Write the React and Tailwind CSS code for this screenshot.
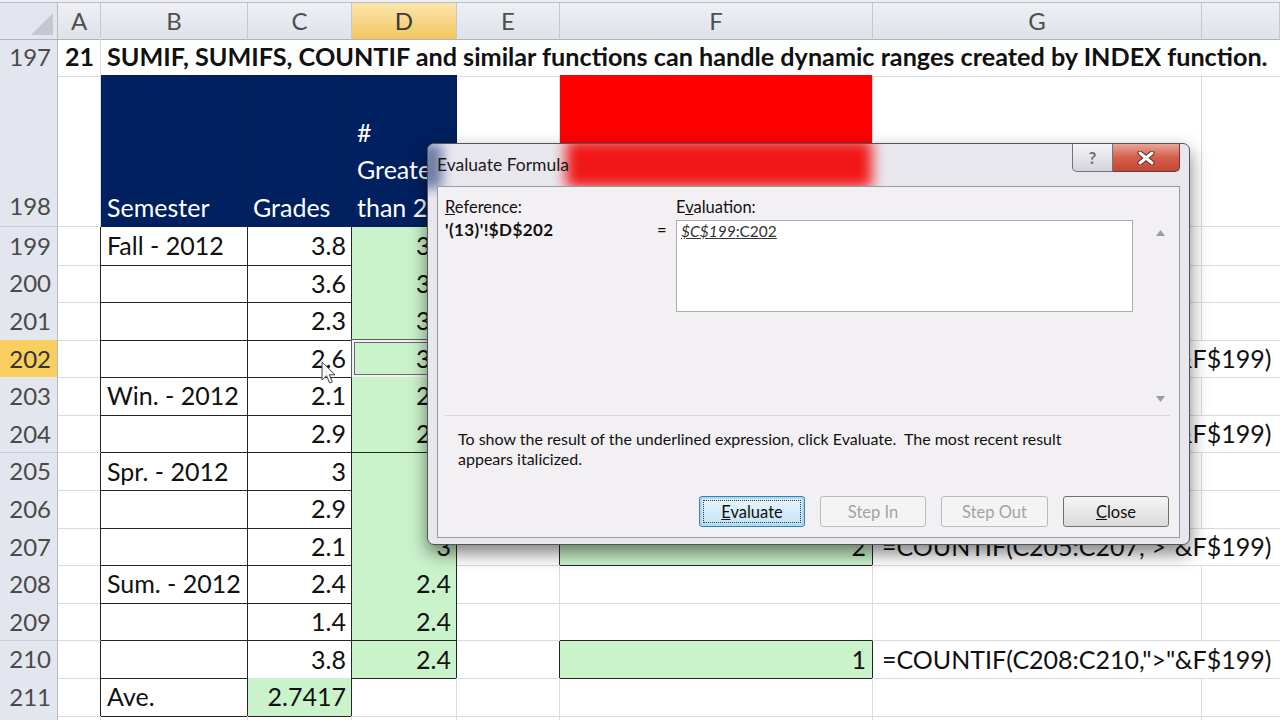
import React from "react";

const COLS = "grid grid-cols-[58px_43px_147px_104px_105px_103px_313px_329px_78px]";

const data = [
  { n: 199, b: "Fall - 2012", c: "3.8", d: "3.8", f: "2.5" },
  { n: 200, c: "3.6", d: "3.8" },
  { n: 201, c: "2.3", d: "3.8" },
  { n: 202, c: "2.6", d: "3.8", f: "3", g: '=COUNTIF(C199:C202,">"&F$199)', sel: true },
  { n: 203, b: "Win. - 2012", c: "2.1", d: "2.1" },
  { n: 204, c: "2.9", d: "2.1", f: "1", g: '=COUNTIF(C203:C204,">"&F$199)' },
  { n: 205, b: "Spr. - 2012", c: "3", d: "3" },
  { n: 206, c: "2.9", d: "3" },
  { n: 207, c: "2.1", d: "3", f: "2", g: '=COUNTIF(C205:C207,">"&F$199)' },
  { n: 208, b: "Sum. - 2012", c: "2.4", d: "2.4" },
  { n: 209, c: "1.4", d: "2.4" },
  { n: 210, c: "3.8", d: "2.4", f: "1", g: '=COUNTIF(C208:C210,">"&F$199)' },
  { n: 211, b: "Ave.", c: "2.7417", cGreen: true, noD: true },
];

// which cells carry the black "all borders" format
const boxed = (i, k) => {
  const r = data[i];
  if (!r) return false;
  if (k === 2 || k === 3) return true;
  if (k === 4) return !r.noD;
  if (k === 6) return r.f !== undefined;
  return false;
};

const rb = (dark) => (dark ? "border-r-[#262626]" : "border-r-[#d9dbe0]");
const bb = (dark) => (dark ? "border-b-[#262626]" : "border-b-[#d9dbe0]");

const rowHead =
  "flex items-center justify-end pr-[6px] text-[24px] text-[#4a4a4a] bg-[#e3e6ee] border-r border-b border-r-[#b7bcc6] border-b-[#c9cdd6]";

function ColumnHeader() {
  const letters = ["A", "B", "C", "D", "E", "F", "G", ""];
  return (
    <div className={`${COLS} h-[36px] border-t border-t-[#b9bec7]`}>
      <div className="relative bg-[#e3e6ee] border-r border-b border-r-[#b7bcc6] border-b-[#aeb3bc] flex items-end justify-end pr-[4px] pb-[4px]">
        <svg width="22" height="22" viewBox="0 0 22 22">
          <polygon points="22,0 22,22 0,22" fill="#c3c7cf" />
        </svg>
      </div>
      {letters.map((l, i) => (
        <div
          key={i}
          className={`flex items-center justify-center text-[24px] border-r border-b border-r-[#c3c8d1] border-b-[#aeb3bc] ${
            l === "D"
              ? "bg-linear-to-b from-[#fbe6ab] to-[#f3c65e] text-[#3a3a3a]"
              : "bg-linear-to-b from-[#eef0f5] to-[#dfe2ea] text-[#4f4f4f]"
          }`}
        >
          {l}
        </div>
      ))}
    </div>
  );
}

function TitleRow() {
  return (
    <div className={`${COLS} h-[37px]`}>
      <div className={rowHead}>197</div>
      <div className="flex items-center justify-end pr-[6px] text-[25px] font-bold border-r border-b border-r-[#d9dbe0] border-b-[#d9dbe0]">
        21
      </div>
      <div className="col-span-7 flex items-center pl-[6px] text-[25.2px] font-bold whitespace-nowrap border-b border-b-[#d9dbe0]">
        SUMIF, SUMIFS, COUNTIF and similar functions can handle dynamic ranges created by INDEX function.
      </div>
    </div>
  );
}

function HeaderRow() {
  const navy = "bg-[#002060] text-white border-r border-b border-[#0c1b4a] flex flex-col justify-end text-[25px] leading-[37.5px]";
  return (
    <div className={`${COLS} h-[152px]`}>
      <div className={`${rowHead} items-end pb-[2px]`}>198</div>
      <div className="border-r border-b border-r-[#d9dbe0] border-b-[#d9dbe0]" />
      <div className={`${navy} pl-[6px]`}>Semester</div>
      <div className={`${navy} pl-[5px]`}>Grades</div>
      <div className={`${navy} pl-[5px]`}>
        <span>#</span>
        <span>Greater</span>
        <span className="whitespace-nowrap">than 2.5</span>
      </div>
      <div className="border-r border-b border-r-[#d9dbe0] border-b-[#d9dbe0]" />
      <div className="bg-[#ff0000] border-r border-b border-r-[#d9dbe0] border-b-[#262626]" />
      <div className="border-r border-b border-r-[#d9dbe0] border-b-[#d9dbe0]" />
      <div className="border-b border-b-[#d9dbe0]" />
    </div>
  );
}

function DataRow({ r, i }) {
  const cell = "border-r border-b flex items-center text-[25px] whitespace-nowrap";
  const green = "bg-[#cbf3cb]";
  const sel = r.n === 202;
  return (
    <div className={`${COLS} h-[37.6px]`}>
      <div className={`${rowHead} ${sel ? "bg-[#f8cf5f] border-b-[#d8a63c] text-[#333]" : ""}`}>{r.n}</div>
      <div className={`${cell} ${rb(boxed(i, 2))} ${bb(false)}`} />
      <div className={`${cell} pl-[6px] ${rb(true)} ${bb(true)}`}>{r.b}</div>
      <div className={`${cell} justify-end pr-[5px] ${r.cGreen ? green : ""} ${rb(true)} ${bb(true)}`}>{r.c}</div>
      <div
        className={`${cell} relative justify-end pr-[5px] ${r.noD ? "" : green} ${rb(boxed(i, 4))} ${bb(
          boxed(i, 4) || boxed(i + 1, 4)
        )}`}
      >
        {r.d}
        {r.sel && (
          <div className="absolute -left-px -top-px w-[106px] h-[39px] border border-[#5c5c5c]">
            <div className="w-full h-full border-2 border-[#f1f1f1]">
              <div className="w-full h-full border border-[#6a6a6a]" />
            </div>
          </div>
        )}
      </div>
      <div className={`${cell} ${rb(boxed(i, 6))} ${bb(false)}`} />
      <div
        className={`${cell} justify-end pr-[6px] ${r.g ? green : ""} ${rb(boxed(i, 6))} ${bb(
          boxed(i, 6) || boxed(i + 1, 6)
        )}`}
      >
        {r.f}
      </div>
      {r.g ? (
        <div className={`${cell} col-span-2 pl-[9px] ${bb(false)} border-r-0`}>{r.g}</div>
      ) : (
        <>
          <div className={`${cell} ${rb(false)} ${bb(false)}`} />
          <div className={`${cell} border-r-0 ${bb(false)}`} />
        </>
      )}
    </div>
  );
}

function UpArrow({ down }) {
  return (
    <svg width="9" height="6" viewBox="0 0 9 6">
      <polygon points={down ? "0,0 9,0 4.5,6" : "0,6 9,6 4.5,0"} fill="#9c9ca4" />
    </svg>
  );
}

function DlgButton({ children, focused, disabled }) {
  return (
    <button
      className={`relative h-[31px] rounded-[3px] border text-[16.5px] ${
        focused
          ? "border-[#3c7fb1] bg-linear-to-b from-[#eaf6fd] to-[#c4e3f6] shadow-[inset_0_0_0_2px_#a7dcf7]"
          : disabled
          ? "border-[#b8bcc2] bg-[#f4f4f4] text-[#a3a3a3]"
          : "border-[#707070] bg-linear-to-b from-[#f5f5f5] to-[#dadada] text-[#111]"
      }`}
    >
      {focused && <span className="absolute inset-[3px] border border-dotted border-[#333]" />}
      <span className="relative">{children}</span>
    </button>
  );
}

function EvaluateDialog() {
  return (
    <div className="absolute left-[427px] top-[143px] w-[763px] h-[402px] rounded-[7px] border border-[#50555d] bg-[#e9e7ee] shadow-[0_8px_18px_rgba(0,0,0,0.5)] overflow-hidden font-[Lato,'Liberation_Sans',sans-serif] flex flex-col">
      {/* aero glass showing the sheet behind */}
      <div className="absolute left-[138px] top-[-4px] w-[306px] h-[48px] bg-[#f20000] blur-[7px] opacity-90" />
      <div className="absolute left-[-8px] top-0 w-[22px] h-[44px] bg-[#1b3472] blur-[6px] opacity-60" />

      <div className="relative flex items-start h-[42px]">
        <div className="ml-[9px] mt-[9px] text-[17.5px] leading-[24px] text-[#1a1a1a]">Evaluate Formula</div>
        <div className="ml-auto mr-[9px] flex">
          <div className="w-[41px] h-[28px] rounded-bl-[5px] border border-t-0 border-[#6f747c] bg-linear-to-b from-[#f5f5f8] to-[#d3d5db] flex items-center justify-center text-[17px] font-bold text-[#6b6f77]">
            ?
          </div>
          <div className="w-[67px] h-[28px] rounded-br-[5px] border border-t-0 border-l-0 border-[#6e3a33] bg-linear-to-b from-[#e9a596] via-[#d4604d] to-[#c44631] flex items-center justify-center">
            <svg width="18" height="14" viewBox="0 0 18 14">
              <path d="M3 2 L15 12 M15 2 L3 12" stroke="#5b2a22" strokeWidth="5" strokeLinecap="round" />
              <path d="M3 2 L15 12 M15 2 L3 12" stroke="#ffffff" strokeWidth="3" strokeLinecap="round" />
            </svg>
          </div>
        </div>
      </div>

      <div className="relative mx-[9px] h-[352px] border border-[#959ba4] bg-[#f3f0f4] text-[16.5px] leading-[20px] text-[#111] flex flex-col">
        <div className="flex pt-[10px] pl-[7px]">
          <div className="w-[231px]">
            <span className="underline">R</span>eference:
          </div>
          <div>
            E<span className="underline">v</span>aluation:
          </div>
        </div>
        <div className="flex mt-[3px] pl-[7px]">
          <div className="w-[212px] font-bold text-[17px] tracking-[0.4px]">'(13)'!$D$202</div>
          <div className="w-[19px]">=</div>
          <div className="w-[457px] h-[92px] border border-[#a9acb3] bg-white pl-[4px] text-[15.5px] text-[#333]">
            <span className="italic underline">$C$199</span>
            <span className="underline">:C202</span>
          </div>
          <div className="ml-[17px] w-[20px] h-[192px] flex flex-col items-center justify-between py-[10px]">
            <UpArrow />
            <UpArrow down />
          </div>
        </div>
        <div className="mt-[3px] ml-[7px] mr-[9px] h-px bg-[#d9d5dc]" />
        <div className="mt-[13px] pl-[20px] text-[16px] leading-[20px]">
          <div>To show the result of the underlined expression, click Evaluate.&nbsp; The most recent result</div>
          <div>appears italicized.</div>
        </div>
        <div className="mt-auto mb-[10px] mr-[10px] flex justify-end gap-[15px]">
          <div className="w-[106px] flex flex-col">
            <DlgButton focused>
              <span className="underline">E</span>valuate
            </DlgButton>
          </div>
          <div className="w-[106px] flex flex-col">
            <DlgButton disabled>Step In</DlgButton>
          </div>
          <div className="w-[107px] flex flex-col">
            <DlgButton disabled>Step Out</DlgButton>
          </div>
          <div className="w-[106px] flex flex-col">
            <DlgButton>
              <span className="underline">C</span>lose
            </DlgButton>
          </div>
        </div>
      </div>
    </div>
  );
}

function Cursor() {
  return (
    <svg className="absolute left-[321px] top-[361px]" width="16" height="26" viewBox="0 0 16 26">
      <path
        d="M1 1 L1 19 L5.5 14.8 L8.6 22 L11.4 20.8 L8.4 13.8 L14 13.8 Z"
        fill="#f4f4f4"
        stroke="#444"
        strokeWidth="1"
        strokeLinejoin="round"
      />
    </svg>
  );
}

export default function App() {
  return (
    <div className="relative w-[1280px] h-[720px] overflow-hidden bg-white font-[Lato,'Liberation_Sans',sans-serif] text-[#111]">
      <div className="h-[2px] bg-[#eceef3]" />
      <ColumnHeader />
      <TitleRow />
      <HeaderRow />
      {data.map((r, i) => (
        <DataRow key={r.n} r={r} i={i} />
      ))}
      <div className={`${COLS} h-[12px]`}>
        <div className="bg-[#e3e6ee] border-r border-r-[#b7bcc6]" />
        <div className="border-r border-r-[#d9dbe0]" />
        <div className="border-r border-r-[#d9dbe0]" />
        <div className="border-r border-r-[#d9dbe0]" />
        <div className="border-r border-r-[#d9dbe0]" />
        <div className="border-r border-r-[#d9dbe0]" />
        <div className="border-r border-r-[#d9dbe0]" />
        <div className="border-r border-r-[#d9dbe0]" />
        <div />
      </div>
      <EvaluateDialog />
      <Cursor />
    </div>
  );
}
